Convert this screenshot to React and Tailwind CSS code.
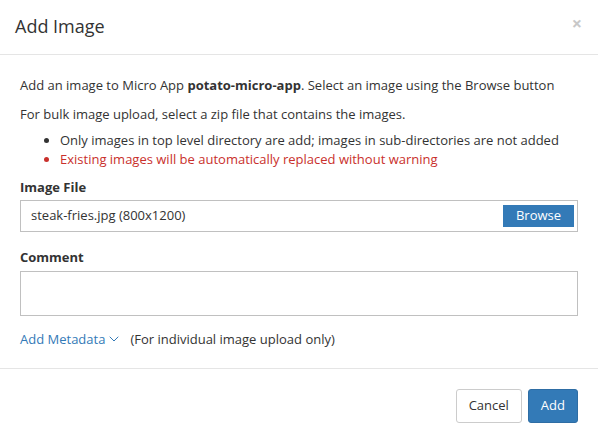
import React from 'react';
import { ChevronDown } from 'lucide-react';

const App = () => {
    return (
        <div className="w-[598px] h-[442px] bg-white text-[#333] text-[13px] leading-[18.5px] font-['Open_Sans',sans-serif] overflow-hidden">
            {/* header */}
            <div className="h-[55px] border-b border-[#e5e5e5] flex items-center justify-between pl-[15px] pr-[16px]">
                <h4 className="text-[18px] leading-[26px] mt-[-2px]">Add Image</h4>
                <button className="text-[18px] font-bold leading-none text-[#c8c8c8] mt-[-9px]">×</button>
            </div>

            {/* body */}
            <div className="px-[20px] pt-[21px] pb-[19px]">
                <p className="mb-[10px]">
                    Add an image to Micro App <b>potato-micro-app</b>. Select an image using the Browse button
                </p>
                <p className="mb-[8px]">For bulk image upload, select a zip file that contains the images.</p>
                <ul className="list-disc pl-[40px] mb-[10px]">
                    <li>Only images in top level directory are add; images in sub-directories are not added</li>
                    <li className="text-[#c9302c]">Existing images will be automatically replaced without warning</li>
                </ul>

                <div className="mb-[16px]">
                    <label className="block font-bold mb-[3px]">Image File</label>
                    <div className="h-[32px] border border-[#c0c0c0] flex items-center justify-between pl-[10px] pr-[3px]">
                        <span>steak-fries.jpg (800x1200)</span>
                        <button className="h-[22px] w-[71px] bg-[#337ab7] text-white text-[13px]">Browse</button>
                    </div>
                </div>

                <div className="mb-[14px]">
                    <label className="block font-bold mb-[5px]">Comment</label>
                    <textarea className="block w-full h-[45px] border border-[#c0c0c0] resize-none" />
                </div>

                <div className="flex items-center">
                    <a className="text-[#337ab7] flex items-center gap-[1px]">
                        Add Metadata
                        <ChevronDown size={16} strokeWidth={1.5} />
                    </a>
                    <span className="ml-[8px]">(For individual image upload only)</span>
                </div>
            </div>

            {/* footer */}
            <div className="border-t border-[#e5e5e5] flex justify-end gap-[6px] px-[20px] pt-[20px]">
                <button className="h-[34px] px-[12px] border border-[#ccc] rounded-[3px] bg-white text-[#333]">Cancel</button>
                <button className="h-[34px] px-[12px] border border-[#2e6da4] rounded-[3px] bg-[#337ab7] text-white">Add</button>
            </div>
        </div>
    );
};

export default App;
